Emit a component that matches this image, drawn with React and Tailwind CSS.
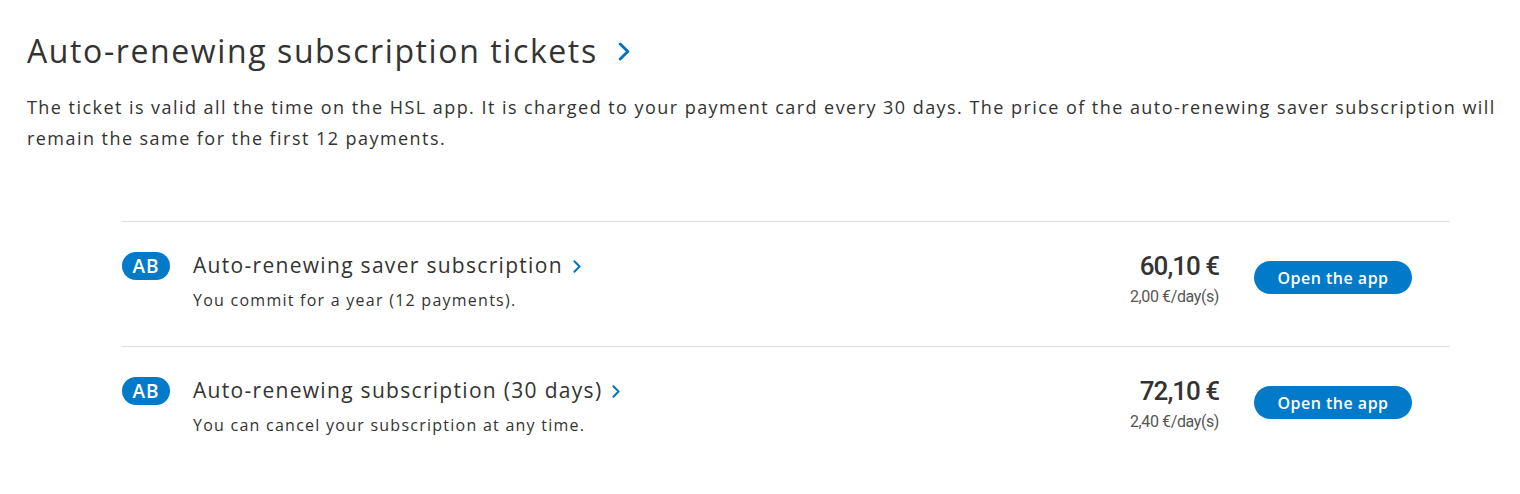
import React from 'react';

const tickets = [
  {
    zone: 'AB',
    title: 'Auto-renewing saver subscription',
    note: 'You commit for a year (12 payments).',
    price: '60,10 €',
    perDay: '2,00 €/day(s)',
  },
  {
    zone: 'AB',
    title: 'Auto-renewing subscription (30 days)',
    note: 'You can cancel your subscription at any time.',
    price: '72,10 €',
    perDay: '2,40 €/day(s)',
  },
];

function Chevron({ className }) {
  return (
    <svg className={className} viewBox="0 0 12 20" fill="none">
      <path d="M2 2l8 8-8 8" stroke="#0074bf" strokeWidth="3" strokeLinecap="round" strokeLinejoin="round" />
    </svg>
  );
}

function TicketRow({ ticket }) {
  return (
    <div className="border-t border-[#dddddd] flex items-start pt-[30px] pb-[34px]">
      <div className="w-[48px] h-[28px] rounded-full bg-[#007ac9] text-white flex items-center justify-center text-[19px] font-semibold tracking-[1px]">
        {ticket.zone}
      </div>
      <div className="ml-[23px] flex-1">
        <div className="flex items-center h-[28px]">
          <span className="text-[21px] font-medium text-[#333333] tracking-[1.3px]">{ticket.title}</span>
          <Chevron className="w-[8px] h-[13px] ml-[10px]" />
        </div>
        <p className="mt-[8px] text-[16px] text-[#333333] tracking-[1.25px]">{ticket.note}</p>
      </div>
      <div className="text-right text-[#333333] mt-[-2px]" style={{ fontFamily: '"Liberation Sans Narrow", "Roboto", sans-serif' }}>
        <div className="text-[26px] font-medium leading-[32px] tracking-[-1px]">{ticket.price}</div>
        <div className="text-[16px] text-[#555555] leading-[20px] mt-[5px] tracking-[-0.4px]">{ticket.perDay}</div>
      </div>
      <button className="ml-[35px] mr-[38px] mt-[9px] w-[158px] h-[33px] rounded-full bg-[#007ac9] text-white text-[16px] font-semibold tracking-[0.5px]">
        Open the app
      </button>
    </div>
  );
}

export default function App() {
  return (
    <div className="w-[1520px] h-[494px] bg-white pl-[27px] pr-[20px] pt-[28px]" style={{ fontFamily: '"Open Sans", "Noto Sans", sans-serif' }}>
      <div className="flex items-center">
        <h2 className="text-[32px] font-medium text-[#333333] leading-[46px] tracking-[1.6px]">Auto-renewing subscription tickets</h2>
        <Chevron className="w-[12px] h-[19px] ml-[20px]" />
      </div>
      <p className="mt-[18px] text-[18px] leading-[31px] text-[#333333] tracking-[1.45px]">
        The ticket is valid all the time on the HSL app. It is charged to your payment card every 30 days. The price of the auto-renewing saver subscription will remain the same for the first 12 payments.
      </p>
      <div className="mt-[67px] ml-[95px] mr-[50px]">
        {tickets.map((t, i) => (
          <TicketRow key={i} ticket={t} />
        ))}
      </div>
    </div>
  );
}
